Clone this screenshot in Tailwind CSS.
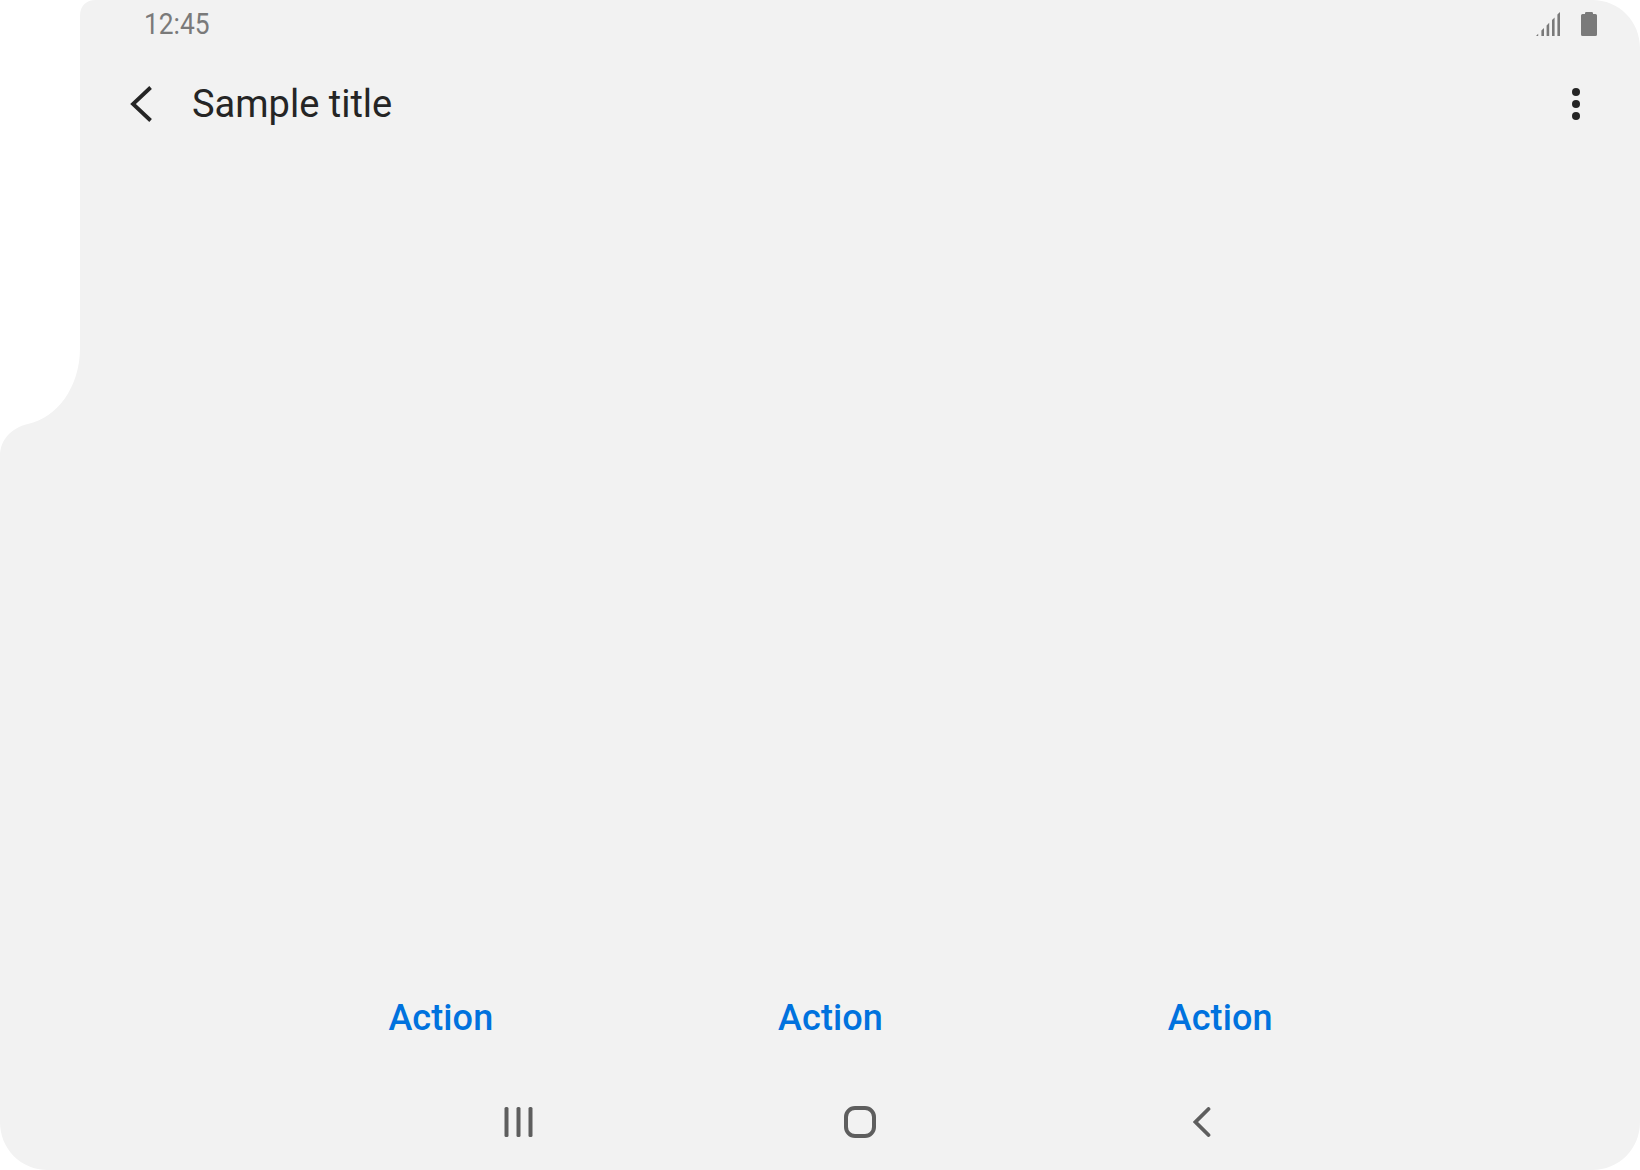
<!DOCTYPE html>
<html lang="en">
<head>
<meta charset="utf-8">
<title>Sample title</title>
<script src="https://cdn.jsdelivr.net/npm/@tailwindcss/browser@4"></script>
</head>
<body class="bg-white">
<div class="relative isolate flex h-[1170px] w-[1640px] flex-col overflow-hidden font-['Roboto',sans-serif]">
  <!-- Screen surface with the camera cutout -->
  <svg class="absolute inset-0 -z-10" width="1640" height="1170" viewBox="0 0 1640 1170" fill="#f2f2f2" aria-hidden="true">
    <path d="M80 16C80 6 86 0 96 0H1592C1619 0 1640 21 1640 48V1122C1640 1149 1619 1170 1592 1170H48C21 1170 0 1149 0 1122V456C0 440 11 428 28 424C57 418 80 387 80 348Z"/>
  </svg>

  <header class="flex h-12 items-center justify-between pl-36 pr-[43px]">
    <time class="origin-left scale-x-[0.878] text-[30px] leading-[48px] text-[#7a7a7a]">12:45</time>
    <div class="flex gap-[21px]">
      <svg width="24" height="24" viewBox="0 0 24 24" fill="#7a7a7a"><path d="M0 24L2.2 21.8V24ZM5.4 24V18.6L8 16V24ZM10.6 24V13.4L13.2 10.8V24ZM16 24V8L18.6 5.4V24ZM21.4 24V2.6L24 0V24Z"/></svg>
      <svg width="16" height="24" viewBox="0 0 16 24" fill="#7a7a7a"><path d="M4 2V1.2Q4 0 5.2 0H10.8Q12 0 12 1.2V2H14.5Q16 2 16 3.5V22.5Q16 24 14.5 24H1.5Q0 24 0 22.5V3.5Q0 2 1.5 2Z"/></svg>
    </div>
  </header>

  <div class="flex h-28 items-center pl-[130px] pr-[60px]">
    <button aria-label="Back"><svg width="22" height="36" viewBox="0 0 22 36" fill="none" stroke="#252525" stroke-width="3.8"><path d="M20.6 1.5L3 18L20.6 34.5"/></svg></button>
    <h1 class="ml-10 text-[38px] leading-[48px] text-[#252525]">Sample title</h1>
    <button class="ml-auto" aria-label="More options"><svg width="8" height="32" viewBox="0 0 8 32" fill="#252525"><circle cx="4" cy="4" r="4"/><circle cx="4" cy="16" r="4"/><circle cx="4" cy="28" r="4"/></svg></button>
  </div>

  <main class="grow"></main>

  <div class="ml-[245px] grid h-28 w-[1170px] grid-cols-3 pl-px text-4xl font-medium tracking-[0.1px] text-[#0072de]">
    <button>Action</button>
    <button>Action</button>
    <button>Action</button>
  </div>

  <nav class="flex h-24 items-center pl-[504px]">
    <button aria-label="Recents"><svg width="30" height="30" viewBox="0 0 30 30" fill="#5e5e5e"><rect x=".5" width="4" height="30" rx="1.5"/><rect x="12.5" width="4" height="30" rx="1.5"/><rect x="24.5" width="4" height="30" rx="1.5"/></svg></button>
    <button class="ml-[310px]" aria-label="Home"><svg width="32" height="32" viewBox="0 0 32 32" fill="none" stroke="#5e5e5e" stroke-width="4"><rect x="2" y="2" width="28" height="28" rx="9"/></svg></button>
    <button class="ml-[316.5px]" aria-label="Navigate back"><svg width="18" height="30" viewBox="0 0 18 30" fill="none" stroke="#5e5e5e" stroke-width="3.8" stroke-linecap="round"><path d="M15.5 2L2.5 15L15.5 28"/></svg></button>
  </nav>
</div>
</body>
</html>
